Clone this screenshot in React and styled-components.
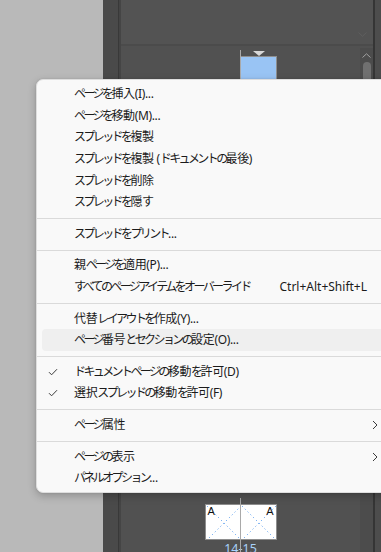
import React from "react";
import styled, { createGlobalStyle } from "styled-components";

const Global = createGlobalStyle`
  html, body { margin: 0; padding: 0; }
  body {
    width: 381px; height: 552px; overflow: hidden;
    background: #b9b9b9;
    font-family: "Noto Sans", "Noto Sans CJK JP", sans-serif;
  }
`;

const Root = styled.div`
  position: relative;
  display: flex;
  width: 381px;
  height: 552px;
  overflow: hidden;
`;

const Gutter = styled.div`
  width: 103px;
  flex: none;
  background: #b9b9b9;
`;

const Panel = styled.div`
  flex: 1;
  display: flex;
  background: #535353;
`;

const VStrip = styled.div`
  flex: none;
  width: ${(p) => p.$w}px;
  background: ${(p) => p.$c};
`;

const Main = styled.div`
  flex: none;
  width: 252px;
  display: flex;
  flex-direction: column;
`;

const TopArea = styled.div`
  height: 44px;
  flex: none;
  background: #535353;
  display: flex;
  justify-content: flex-end;
  align-items: flex-end;
  padding: 0 6px 7px 0;
  box-sizing: border-box;
`;

const HRule = styled.div`
  height: 2px;
  flex: none;
  background: #4b4b4b;
`;

const Lower = styled.div`
  flex: 1;
  display: flex;
  background: #515151;
  min-height: 0;
`;

const Thumbs = styled.div`
  flex: 1;
  display: flex;
  flex-direction: column;
  align-items: center;
  padding-top: 4px;
  overflow: hidden;
`;

const SpreadItem = styled.div`
  position: relative;
  display: flex;
  flex-direction: column;
  align-items: center;
  width: 72px;
  margin-top: ${(p) => (p.$bottom ? "auto" : "0")};
  margin-bottom: ${(p) => (p.$bottom ? "-5px" : "0")};
  &::before {
    content: "";
    position: absolute;
    left: 35px;
    top: 0;
    bottom: 0;
    width: 1px;
    background: #a9a9a9;
    z-index: 2;
  }
`;

const MarkerRow = styled.div`
  height: 6px;
  width: 100%;
  display: flex;
  justify-content: ${(p) => (p.$side === "right" ? "flex-end" : "center")};
  padding-right: ${(p) => (p.$side === "right" ? "12px" : "0")};
  box-sizing: border-box;
`;

const Triangle = styled.div`
  width: 0;
  height: 0;
  margin-top: 1px;
  border-left: 6px solid transparent;
  border-right: 6px solid transparent;
  border-top: 5px solid #d8d8d8;
`;

const Pages = styled.div`
  display: flex;
  width: 72px;
  height: 36px;
`;

const Page = styled.div`
  position: relative;
  width: 36px;
  height: 36px;
  box-sizing: border-box;
  border: 1px solid ${(p) => (p.$empty ? "transparent" : "#8e8e8e")};
  border-left-width: ${(p) => (p.$side === "right" ? "0" : "1px")};
  border-right-width: ${(p) => (p.$side === "left" ? "0" : "1px")};
  background: ${(p) => (p.$empty ? "transparent" : p.$selected ? "#99c4f4" : "#ffffff")};
  overflow: hidden;
`;

const Master = styled.span`
  position: absolute;
  top: 1px;
  ${(p) => (p.$side === "right" ? "right: 2px;" : "left: 2px;")}
  font-family: "Liberation Sans", Arial, sans-serif;
  font-size: 11px;
  line-height: 11px;
  color: #111;
`;

const PageLabel = styled.div`
  margin-top: 1px;
  height: 16px;
  font-family: "Noto Sans", "Liberation Sans", sans-serif;
  font-size: 12.5px;
  line-height: 16px;
  color: #a8d2fb;
`;

const ScrollCol = styled.div`
  flex: none;
  width: 13px;
  margin-top: 2px;
  background: #4c4c4c;
  display: flex;
  flex-direction: column;
  align-items: center;
`;

const ScrollArrow = styled.div`
  height: 12px;
  display: flex;
  align-items: center;
  justify-content: center;
  margin-top: 1px;
`;

const Thumb = styled.div`
  width: 8px;
  height: 200px;
  margin-top: 1px;
  border-radius: 4px;
  background: #707070;
`;

/* ---------- menu ---------- */

const Menu = styled.div`
  position: absolute;
  left: 36px;
  top: 79px;
  width: 356px;
  box-sizing: border-box;
  padding: 3.5px 5px 3px;
  background: #f9f9f9;
  border: 1px solid #dedede;
  border-radius: 7px;
  box-shadow: 0 3px 9px rgba(0, 0, 0, 0.22), 0 0 2px rgba(0, 0, 0, 0.12);
  font-family: "Noto Sans", "Noto Sans CJK JP", sans-serif;
  font-size: 12px;
  color: #1b1b1b;
  z-index: 10;
`;

const Row = styled.div`
  display: flex;
  align-items: center;
  height: 21.6px;
  border-radius: 4px;
  background: ${(p) => (p.$active ? "#efefef" : "transparent")};
`;

const CheckCol = styled.div`
  width: 32px;
  flex: none;
  display: flex;
  align-items: center;
  justify-content: flex-start;
  padding-left: 6px;
  box-sizing: border-box;
`;

const Label = styled.div`
  flex: 1;
  white-space: nowrap;
  line-height: 1;
  letter-spacing: -0.35px;
`;

const Kana = styled.span`
  letter-spacing: -2.6px;
`;

const Shortcut = styled.div`
  flex: none;
  white-space: nowrap;
  line-height: 1;
  color: #1b1b1b;
`;

const ArrowCol = styled.div`
  width: 19px;
  flex: none;
  display: flex;
  align-items: center;
  padding-left: 5px;
  box-sizing: border-box;
`;

const Sep = styled.div`
  height: 1px;
  margin: 5px -5px 4px;
  background: #dadada;
`;

const Check = () => (
  <svg width="10" height="8" viewBox="0 0 10 8">
    <path d="M1 4.2 L3.6 6.8 L9 1.2" fill="none" stroke="#3a3a3a" strokeWidth="1" />
  </svg>
);

const ChevronRight = () => (
  <svg width="6" height="10" viewBox="0 0 6 10">
    <path d="M1 1 L5 5 L1 9" fill="none" stroke="#3c3c3c" strokeWidth="1" />
  </svg>
);

const ChevronSmall = ({ up, color }) => (
  <svg width="9" height="5" viewBox="0 0 9 5">
    <path
      d={up ? "M0.5 4.5 L4.5 0.8 L8.5 4.5" : "M0.5 0.5 L4.5 4.2 L8.5 0.5"}
      fill="none"
      stroke={color}
      strokeWidth="1"
    />
  </svg>
);

const Cross = () => (
  <svg width="36" height="36" viewBox="0 0 36 36" style={{ position: "absolute", left: 0, top: 0 }}>
    <line x1="1" y1="1" x2="35" y2="35" stroke="#4b95ee" strokeWidth="1" strokeDasharray="1 3" />
    <line x1="35" y1="1" x2="1" y2="35" stroke="#4b95ee" strokeWidth="1" strokeDasharray="1 3" />
  </svg>
);

/* kana runs are set tighter, like a proportional Japanese UI font */
const KANA = /([\u3040-\u30ff]+)/;
const MenuText = ({ text }) =>
  text.split(KANA).map((part, i) =>
    KANA.test(part) ? <Kana key={i}>{part}</Kana> : <React.Fragment key={i}>{part}</React.Fragment>
  );

const items = [
  { label: "ページを挿入(I)..." },
  { label: "ページを移動(M)..." },
  { label: "スプレッドを複製" },
  { label: "スプレッドを複製 (ドキュメントの最後)" },
  { label: "スプレッドを削除" },
  { label: "スプレッドを隠す" },
  { sep: true },
  { label: "スプレッドをプリント..." },
  { sep: true },
  { label: "親ページを適用(P)..." },
  { label: "すべてのページアイテムをオーバーライド", shortcut: "Ctrl+Alt+Shift+L" },
  { sep: true },
  { label: "代替レイアウトを作成(Y)..." },
  { label: "ページ番号とセクションの設定(O)...", active: true },
  { sep: true },
  { label: "ドキュメントページの移動を許可(D)", checked: true },
  { label: "選択スプレッドの移動を許可(F)", checked: true },
  { sep: true },
  { label: "ページ属性", sub: true },
  { sep: true },
  { label: "ページの表示", sub: true },
  { label: "パネルオプション..." },
];

export default function App() {
  return (
    <>
      <Global />
      <Root>
        <Gutter />
        <Panel>
          <VStrip $w={15} $c="#4a4a4a" />
          <VStrip $w={1} $c="#393939" />
          <VStrip $w={2} $c="#454545" />
          <Main>
            <TopArea>
              <ChevronSmall color="#5f5f5f" />
            </TopArea>
            <HRule />
            <Lower>
              <Thumbs>
                <SpreadItem>
                  <MarkerRow $side="right">
                    <Triangle />
                  </MarkerRow>
                  <Pages>
                    <Page $empty $side="left" />
                    <Page $side="right" $selected />
                  </Pages>
                  <PageLabel>1</PageLabel>
                </SpreadItem>
                <SpreadItem $bottom>
                  <MarkerRow />
                  <Pages>
                    <Page $side="left">
                      <Cross />
                      <Master>A</Master>
                    </Page>
                    <Page $side="right">
                      <Cross />
                      <Master $side="right">A</Master>
                    </Page>
                  </Pages>
                  <PageLabel>14-15</PageLabel>
                </SpreadItem>
              </Thumbs>
              <ScrollCol>
                <ScrollArrow>
                  <ChevronSmall up color="#a0a0a0" />
                </ScrollArrow>
                <Thumb />
              </ScrollCol>
            </Lower>
          </Main>
          <VStrip $w={2} $c="#353535" />
          <VStrip $w={6} $c="#4d4d4d" />
        </Panel>
        <Menu>
          {items.map((it, i) =>
            it.sep ? (
              <Sep key={i} />
            ) : (
              <Row key={i} $active={it.active}>
                <CheckCol>{it.checked && <Check />}</CheckCol>
                <Label>
                  <MenuText text={it.label} />
                </Label>
                {it.shortcut && <Shortcut>{it.shortcut}</Shortcut>}
                <ArrowCol>{it.sub && <ChevronRight />}</ArrowCol>
              </Row>
            )
          )}
        </Menu>
      </Root>
    </>
  );
}
